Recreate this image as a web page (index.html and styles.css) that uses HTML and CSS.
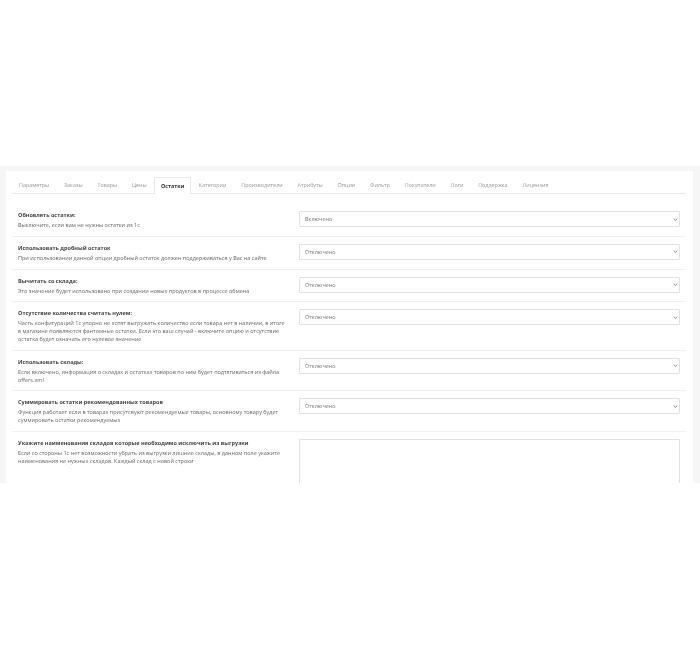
FILE: index.html
```html
<html lang="en">
<head>
    <meta charset="UTF-8">
    <title>Остатки</title>
    <link rel="stylesheet" href="styles.css">
</head>
<body>
    <div class="page">
        <div class="panel">
            <div class="tabs">
                <div class="tab">Параметры</div>
                <div class="tab">Заказы</div>
                <div class="tab">Товары</div>
                <div class="tab">Цены</div>
                <div class="tab active">Остатки</div>
                <div class="tab">Категории</div>
                <div class="tab">Производители</div>
                <div class="tab">Атрибуты</div>
                <div class="tab">Опции</div>
                <div class="tab">Фильтр</div>
                <div class="tab">Покупатели</div>
                <div class="tab">Логи</div>
                <div class="tab">Поддержка</div>
                <div class="tab">Лицензия</div>
            </div>

            <div class="row">
                <div class="info">
                    <div class="title">Обновлять остатки:</div>
                    <div class="desc">Выключите, если вам не нужны остатки из 1с</div>
                </div>
                <div class="field"><div class="select">Включено<svg class="arrow" viewBox="0 0 8 5"><path d="M1 1l3 3 3-3" /></svg></div></div>
            </div>
            <div class="row">
                <div class="info">
                    <div class="title">Использовать дробный остаток</div>
                    <div class="desc">При использовании данной опции дробный остаток должен поддерживаться у Вас на сайте</div>
                </div>
                <div class="field"><div class="select">Отключено<svg class="arrow" viewBox="0 0 8 5"><path d="M1 1l3 3 3-3" /></svg></div></div>
            </div>
            <div class="row">
                <div class="info">
                    <div class="title">Вычитать со склада:</div>
                    <div class="desc">Это значение будет использовано при создании новых продуктов в процессе обмена</div>
                </div>
                <div class="field"><div class="select">Отключено<svg class="arrow" viewBox="0 0 8 5"><path d="M1 1l3 3 3-3" /></svg></div></div>
            </div>
            <div class="row">
                <div class="info">
                    <div class="title">Отсутствие количества считать нулем:</div>
                    <div class="desc">Часть конфигураций 1с упорно не хотят выгружать количество если товара нет в наличии, в итоге в магазине появляются фантомные остатки. Если это ваш случай - включите опцию и отсутствие остатка будет означать его нулевое значение</div>
                </div>
                <div class="field"><div class="select">Отключено<svg class="arrow" viewBox="0 0 8 5"><path d="M1 1l3 3 3-3" /></svg></div></div>
            </div>
            <div class="row">
                <div class="info">
                    <div class="title">Использовать склады:</div>
                    <div class="desc">Если включено, информация о складах и остатках товаров по ним будет подтягиваться из файла offers.xml</div>
                </div>
                <div class="field"><div class="select">Отключено<svg class="arrow" viewBox="0 0 8 5"><path d="M1 1l3 3 3-3" /></svg></div></div>
            </div>
            <div class="row">
                <div class="info">
                    <div class="title">Суммировать остатки рекомендованных товаров</div>
                    <div class="desc">Функция работает если в товарах присутсвуют рекомендуемые товары, основному товару будет суммировать остатки рекомендуемых</div>
                </div>
                <div class="field"><div class="select">Отключено<svg class="arrow" viewBox="0 0 8 5"><path d="M1 1l3 3 3-3" /></svg></div></div>
            </div>
            <div class="row last">
                <div class="info">
                    <div class="title">Укажите наименования складов которые необходимо исключить из выгрузки</div>
                    <div class="desc">Если со стороны 1с нет возможности убрать из выгрузки лишние склады, в данном поле укажите наименования не нужных складов. Каждый склад с новой строки</div>
                </div>
                <div class="field"><div class="textarea"></div></div>
            </div>
        </div>
    </div>
</body>
</html>
```
FILE: styles.css
```css
body{
    margin: 0;
    background-color: white;
    font-family: "Open Sans", sans-serif;
    text-rendering: geometricPrecision;
}

.page{
    margin-top: 166px;
    height: 317px;
    padding: 5px 7px 0 6px;
    background-color: #f6f6f6;
    overflow: hidden;
    box-sizing: border-box;
}

/* the reference is a scaled down shot, everything is a bit soft */
.panel{
    background-color: white;
    padding: 6px 7px 0 6px;
    min-height: 400px;
    filter: blur(0.4px);
}

.tabs{
    display: flex;
    height: 16px;
    margin-bottom: 10px;
    border-bottom: 1px solid #e8e8e8;
}

.tab{
    padding: 0 7px;
    margin-right: 0.8px;
    font-size: 5.4px;
    line-height: 17px;
    color: #999;
    height: 16px;
}

.tab.active{
    color: #333;
    font-weight: 700;
    background-color: white;
    border: 1px solid #e8e8e8;
    border-bottom: none;
    height: 17px;
    box-sizing: border-box;
    padding: 0 5.6px;
    line-height: 16px;
}

.row{
    display: flex;
    justify-content: space-between;
    padding: 7px 6px 6px 6px;
    border-bottom: 1px solid #f1f1f1;
}

.row.last{
    border-bottom: none;
}

.info{
    width: 270px;
}

.title{
    font-size: 5.5px;
    font-weight: 700;
    line-height: 8px;
    color: #444;
    margin-bottom: 3px;
}

.desc{
    font-size: 5.5px;
    line-height: 7.8px;
    color: #666;
}

.field{
    width: 381px;
}

.select{
    display: flex;
    align-items: center;
    justify-content: space-between;
    box-sizing: border-box;
    height: 16px;
    padding: 0 1px 0 5px;
    font-size: 5.5px;
    color: #777;
    background-color: white;
    border: 1px solid #e2e2e2;
    border-radius: 1px;
}

.arrow{
    width: 5px;
    height: 3px;
    fill: none;
    stroke: #777;
    stroke-width: 1.4;
}

.textarea{
    height: 120px;
    box-sizing: border-box;
    background-color: white;
    border: 1px solid #e2e2e2;
    border-radius: 1px;
}
```
